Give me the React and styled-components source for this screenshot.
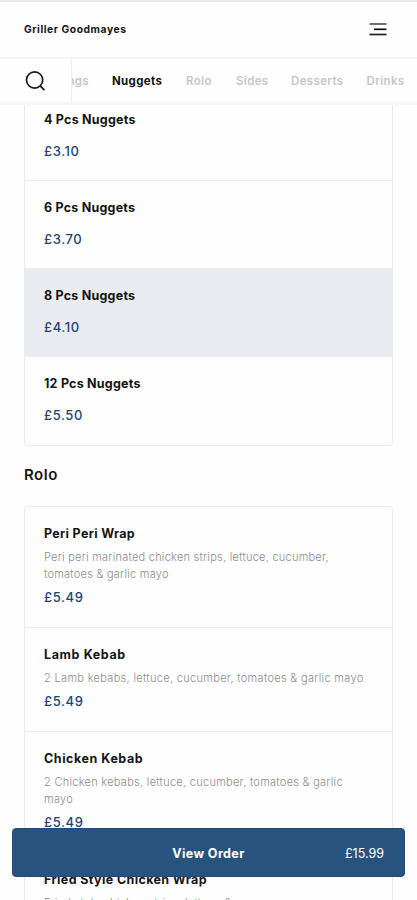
import React from "react";
import styled, { createGlobalStyle } from "styled-components";

const GlobalStyle = createGlobalStyle`
  * {
    box-sizing: border-box;
  }

  body {
    margin: 0;
    background: #fefefe;
    color: #151515;
    font-family: Inter, "Open Sans", sans-serif;
  }
`;

const PageStyle = styled.div`
  height: 900px;
  position: relative;
  display: flex;
  flex-direction: column;
  overflow: hidden;
  border-top: 2px solid #ececec;
`;

const Header = styled.header`
  flex: none;
  height: 57px;
  display: flex;
  align-items: center;
  justify-content: space-between;
  padding: 0 30px 2px 24px;
  border-bottom: 2px solid #f4f4f4;
`;

const Brand = styled.h1`
  margin: 0;
  font-size: 10.3px;
  font-weight: 700;
  letter-spacing: 0.55px;
`;

const CategoryBar = styled.nav`
  flex: none;
  height: 46px;
  display: flex;
  border-bottom: 3px solid #f6f6f6;
`;

const SearchButton = styled.button`
  flex: none;
  width: 72px;
  padding: 0 0 0 23px;
  display: flex;
  align-items: center;
  background: none;
  border: 0;
  border-right: 1px solid #ededed;
`;

const CategoryList = styled.div`
  flex: 1;
  display: flex;
  align-items: center;
  overflow: hidden;
`;

const Category = styled.span`
  flex: none;
  width: ${(props) => props.$width}px;
  margin-left: ${(props) => props.$offset || 0}px;
  font-size: 11.5px;
  font-weight: ${(props) => (props.$active ? 700 : 600)};
  letter-spacing: 0.35px;
  color: ${(props) => (props.$active ? "#111" : "#c6c6c6")};
  white-space: nowrap;
`;

const Menu = styled.main`
  flex: 1;
  min-height: 0;
  overflow: hidden;
  padding: 0 24px;
`;

const Card = styled.section`
  margin-top: ${(props) => (props.$scrolled ? -13 : 0)}px;
  border: 1px solid #ebebeb;
  border-radius: 4px;
`;

const Item = styled.article`
  height: ${(props) => props.$height}px;
  padding: 18px 19px 0;
  background: ${(props) => (props.$selected ? "#e8ebf0" : "transparent")};
  border-bottom: 1px solid #ececec;

  &:last-child {
    border-bottom: 0;
  }
`;

const ItemName = styled.h3`
  margin: 0;
  font-size: 12.5px;
  line-height: 18px;
  font-weight: 700;
  letter-spacing: ${(props) => props.$spacing || 0.22}px;
  white-space: nowrap;
`;

const Description = styled.p`
  margin: 6px 0 0;
  font-size: 11px;
  line-height: 17px;
  font-weight: 300;
  letter-spacing: ${(props) => props.$spacing || 0.28}px;
  color: #8c8c8c;
  white-space: pre;
`;

const Price = styled.div`
  margin-top: ${(props) => (props.$wide ? 13 : 5)}px;
  font-size: 13px;
  line-height: 18px;
  font-weight: 500;
  letter-spacing: 0.6px;
  color: #1d4475;
`;

const SectionTitle = styled.h2`
  margin: 18px 0 21px;
  font-size: 15px;
  line-height: 21px;
  font-weight: 600;
  letter-spacing: 0.5px;
`;

const OrderButton = styled.button`
  position: absolute;
  left: 12px;
  right: 12px;
  bottom: 23px;
  height: 49px;
  display: grid;
  grid-template-columns: 1fr auto 1fr;
  align-items: center;
  padding: 2px 20px 0;
  color: #fff;
  font-family: inherit;
  font-size: 12.5px;
  font-weight: 700;
  letter-spacing: 0.4px;
  background: #28537e;
  border: 1px solid #1e4b78;
  border-radius: 4px;
`;

const OrderTotal = styled.span`
  justify-self: end;
  font-weight: 400;
  letter-spacing: 0;
`;

const categories = [
  { name: "Wings", width: 60, offset: -20 },
  { name: "Nuggets", width: 74, active: true },
  { name: "Rolo", width: 50 },
  { name: "Sides", width: 55 },
  { name: "Desserts", width: 75.5 },
  { name: "Drinks", width: 50 },
];

const nuggets = [
  { name: "4 Pcs Nuggets", price: "£3.10" },
  { name: "6 Pcs Nuggets", price: "£3.70" },
  { name: "8 Pcs Nuggets", price: "£4.10", selected: true },
  { name: "12 Pcs Nuggets", price: "£5.50" },
];

const rolo = [
  {
    name: "Peri Peri Wrap",
    description:
      "Peri peri marinated chicken strips, lettuce, cucumber,\ntomatoes & garlic mayo",
    price: "£5.49",
    height: 121,
    spacing: 0.32,
    textSpacing: 0.25,
  },
  {
    name: "Lamb Kebab",
    description: "2 Lamb kebabs, lettuce, cucumber, tomatoes & garlic mayo",
    price: "£5.49",
    height: 104,
    spacing: 0.62,
    textSpacing: 0.32,
  },
  {
    name: "Chicken Kebab",
    description: "2 Chicken kebabs, lettuce, cucumber, tomatoes & garlic\nmayo",
    price: "£5.49",
    height: 121,
    spacing: 0.55,
  },
  {
    name: "Fried Style Chicken Wrap",
    description: "Fried style chicken strips, lettuce & mayo",
    price: "£5.49",
    height: 104,
    spacing: 0.38,
  },
];

const SearchIcon = () => (
  <svg width="24" height="24" viewBox="0 0 24 24" fill="none" stroke="#171717" strokeWidth="1.7">
    <circle cx="11.6" cy="11" r="8.1" />
    <path d="M17.2 16.8l4.2 4.3" />
  </svg>
);

const MenuIcon = () => (
  <svg width="18" height="14" viewBox="0 0 18 14" fill="none" strokeWidth="1.7">
    <path d="M0.5 2h17" stroke="#555" />
    <path d="M5 7.3h12.5" stroke="#111" />
    <path d="M0.5 12.5h17" stroke="#222" />
  </svg>
);

const App = () => {
  return (
    <>
      <GlobalStyle />
      <PageStyle>
        <Header>
          <Brand>Griller Goodmayes</Brand>
          <MenuIcon />
        </Header>
        <CategoryBar>
          <SearchButton aria-label="Search">
            <SearchIcon />
          </SearchButton>
          <CategoryList>
            {categories.map((c) => (
              <Category
                key={c.name}
                $width={c.width}
                $offset={c.offset}
                $active={c.active}
              >
                {c.name}
              </Category>
            ))}
          </CategoryList>
        </CategoryBar>
        <Menu>
          <Card $scrolled>
            {nuggets.map((item) => (
              <Item key={item.name} $height={88} $selected={item.selected}>
                <ItemName>{item.name}</ItemName>
                <Price $wide>{item.price}</Price>
              </Item>
            ))}
          </Card>
          <SectionTitle>Rolo</SectionTitle>
          <Card>
            {rolo.map((item) => (
              <Item key={item.name} $height={item.height}>
                <ItemName $spacing={item.spacing}>{item.name}</ItemName>
                <Description $spacing={item.textSpacing}>{item.description}</Description>
                <Price>{item.price}</Price>
              </Item>
            ))}
          </Card>
        </Menu>
        <OrderButton>
          <span />
          <span>View Order</span>
          <OrderTotal>£15.99</OrderTotal>
        </OrderButton>
      </PageStyle>
    </>
  );
};

export default App;
